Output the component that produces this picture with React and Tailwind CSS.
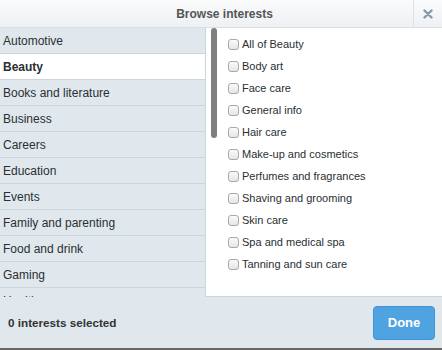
import React from "react";

const cats = ["Automotive","Beauty","Books and literature","Business","Careers","Education","Events","Family and parenting","Food and drink","Gaming","Health"];
const items = ["All of Beauty","Body art","Face care","General info","Hair care","Make-up and cosmetics","Perfumes and fragrances","Shaving and grooming","Skin care","Spa and medical spa","Tanning and sun care"];

export default function App() {
  return (
    <div className="w-[442px] h-[350px] flex flex-col overflow-hidden bg-white text-[#292f33]" style={{fontFamily: '"Liberation Sans", Arial, sans-serif'}}>
      <div className="h-[28px] shrink-0 flex border-b border-[#d8dee2] bg-gradient-to-b from-[#fafbfc] to-[#eef1f4]">
        <div className="flex-1 flex items-center justify-center text-[12px] font-bold text-[#555] pl-[36px]">Browse interests</div>
        <div className="w-[29px] border-l border-[#dde2e6] flex items-center justify-center">
          <svg width="10" height="10" viewBox="0 0 10 10"><path d="M1.5 1.5 L8.5 8.5 M8.5 1.5 L1.5 8.5" stroke="#8899a6" strokeWidth="2.4" strokeLinecap="round"/></svg>
        </div>
      </div>
      <div className="flex h-[269px] shrink-0 bg-white">
        <div className="w-[206px] overflow-hidden bg-[#e1e8ed] border-r border-[#ccd6dd] flex flex-col">
          {cats.map((c) => (
            <div key={c} className={`h-[26px] shrink-0 flex items-center pl-[3px] text-[12px] border-b border-[#ccd6dd] ${c === "Beauty" ? "bg-white font-bold" : ""}`}>{c}</div>
          ))}
        </div>
        <div className="flex-1 relative flex border-b border-[#ccd6dd]">
          <div className="absolute left-[5px] top-[0px] w-[6px] h-[110px] rounded-[3px] bg-[#7f7f7f]" />
          <div className="flex flex-col pt-[5px] pl-[22px]">
            {items.map((t) => (
              <div key={t} className="h-[22px] flex items-center text-[11px]">
                <span className="w-[11px] h-[11px] rounded-[3px] border border-[#a8a8a8] bg-gradient-to-b from-[#fafafa] to-[#e6e6e6] mr-[3px]" />
                {t}
              </div>
            ))}
          </div>
        </div>
      </div>
      <div className="flex-1 bg-[#e1e8ed] border-b-2 border-[#666] flex items-center justify-between pl-[8px] pr-[7px]">
        <div className="text-[11.7px] font-bold text-[#333]">0 interests selected</div>
        <div className="w-[62px] h-[34px] rounded-[4px] bg-[#4fa3e0] border border-[#3f95d3] flex items-center justify-center text-white font-bold text-[13px]">Done</div>
      </div>
    </div>
  );
}
